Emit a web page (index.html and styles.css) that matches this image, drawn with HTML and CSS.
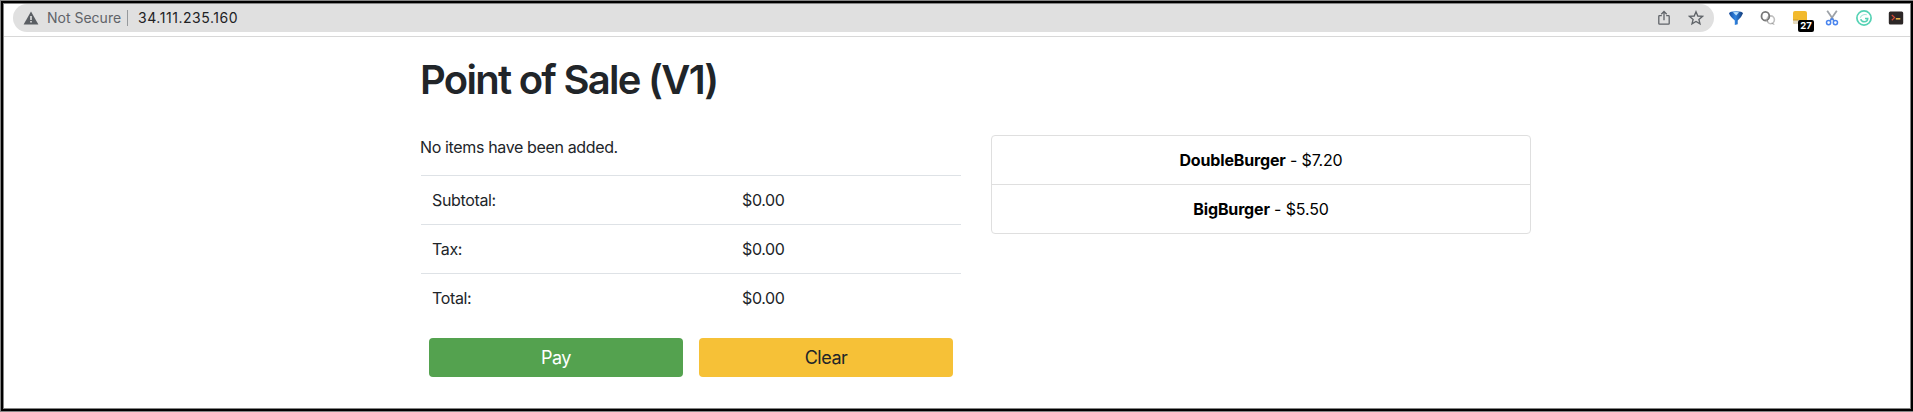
FILE: index.html
```html
<!DOCTYPE html>
<html lang="en">
<head>
<meta charset="utf-8">
<title>Point of Sale</title>
<link rel="stylesheet" href="styles.css">
</head>
<body>
<div class="window">
  <header class="toolbar">
    <div class="address">
      <svg class="warn" width="16" height="14" viewBox="0 0 16 14"><path d="M8 .6 15.4 13.4H.6z" fill="#5a5e63"/><path d="M7.2 5h1.6v4H7.2zM7.2 10h1.6v1.6H7.2z" fill="#e0e0e0"/></svg>
      <span class="insecure">Not Secure</span>
      <span class="divider"></span>
      <span class="url">34.111.235.160</span>
      <svg class="share" width="12" height="16" viewBox="0 0 12 16" fill="none" stroke="#5f6368" stroke-width="1.3"><path d="M3.8 5.6H1.6q-.8 0-.8.8v7q0 .8.8.8h8.8q.8 0 .8-.8v-7q0-.8-.8-.8H8.2M6 10.3V1.6M3.3 4.2 6 1.4l2.7 2.8"/></svg>
      <svg class="star" width="16" height="16" viewBox="0 0 16 16" fill="none" stroke="#5f6368" stroke-width="1.35"><path d="M8 1.8 9.8 6l4.6.4-3.5 3 1.1 4.5L8 11.5l-4 2.4 1.1-4.5-3.5-3L6.2 6z"/></svg>
    </div>
    <div class="extensions">
      <svg width="16" height="16" viewBox="0 0 16 16"><defs><linearGradient id="f" x1="0" x2="1"><stop offset="0" stop-color="#174a9a"/><stop offset=".45" stop-color="#2f83e0"/><stop offset="1" stop-color="#123a78"/></linearGradient></defs><path d="M1 3.2Q1.5 1.2 8 1.2t7 2Q14 6.5 9.7 10.5v3.7L6.8 15v-4.5Q2 6.5 1 3.2z" fill="url(#f)"/><path d="M5 2.2q3-.6 6 0L8.2 5.4z" fill="#b9defb"/></svg>
      <svg width="16" height="16" viewBox="0 0 16 16" fill="none"><ellipse cx="10.7" cy="9.8" rx="3.7" ry="3.9" stroke="#c0c0c0" stroke-width="1.6"/><ellipse cx="5.4" cy="6.2" rx="3.9" ry="4.3" stroke="#777" stroke-width="1.8"/><path d="m5.5 10 2.8 1.8M11.5 13.3l2.8 1" stroke="#999"/></svg>
      <span class="notes"><svg width="16" height="16" viewBox="0 0 16 16"><rect x="1" y="1" width="14" height="13" rx="2" fill="#f2ba2e"/><path d="M1 10h6v4H3q-2 0-2-2z" fill="#e3dac4"/><path d="M1 10h5" stroke="#c99a2c"/></svg><b class="count">27</b></span>
      <svg width="16" height="16" viewBox="0 0 16 16" fill="none"><path d="M3.2.8 9.6 10M12.8.8 6.4 10" stroke="#9da2a8" stroke-width="1.8"/><g stroke="#4a85ee" stroke-width="1.5"><circle cx="4.6" cy="12.6" r="2.1"/><circle cx="11.4" cy="12.6" r="2.1"/><path d="m6 10.8 2-2.2 2 2.2"/></g></svg>
      <svg width="16" height="16" viewBox="0 0 16 16" fill="none"><circle cx="8" cy="8" r="7.1" stroke="#55d2b4" stroke-width="1.7"/><path d="M10.8 4.7Q6 3.7 4.3 7.7" stroke="#a5e8d9" stroke-width="1.1"/><path d="M4.7 9.2q.9 2.6 3.6 2.6 3.3 0 3.4-3.3H9" stroke="#55d2b4" stroke-width="1.6"/></svg>
      <svg width="16" height="16" viewBox="0 0 16 16" fill="none"><rect x=".8" y="1.5" width="14.4" height="13" rx="1.5" fill="#2c2727"/><path d="m3.8 5 2.8 2.6-2.8 2.6" stroke="#d84a37" stroke-width="1.2"/><path d="M7.8 8.8h4.5" stroke="#f0b84a" stroke-width="1.5"/></svg>
    </div>
  </header>
  <main class="container">
    <h1 class="title">Point of Sale (V1)</h1>
    <div class="columns">
      <section class="order">
        <p class="empty">No items have been added.</p>
        <dl class="totals">
          <div class="total-row"><dt>Subtotal:</dt><dd>$0.00</dd></div>
          <div class="total-row"><dt>Tax:</dt><dd>$0.00</dd></div>
          <div class="total-row"><dt>Total:</dt><dd>$0.00</dd></div>
        </dl>
        <div class="actions">
          <button class="btn pay">Pay</button>
          <button class="btn clear">Clear</button>
        </div>
      </section>
      <section class="menu">
        <div class="item"><strong>DoubleBurger</strong> - $7.20</div>
        <div class="item"><strong>BigBurger</strong> - $5.50</div>
      </section>
    </div>
  </main>
</div>
</body>
</html>
```
FILE: styles.css
```css
* { box-sizing: border-box; }
body {
  margin: 0;
  background: #fff;
  color: #212529;
  font: 16px/24px Inter, "Liberation Sans", sans-serif;
}
.window {
  height: 412px;
  overflow: hidden;
  padding: 4px 3px 4px 4px;
  position: relative;
}
.window::after {
  content: "";
  position: absolute;
  inset: 0 -1px 0 0;
  border: 1px solid #858585;
  box-shadow: inset 0 0 0 2px #000, inset 0 0 0 3px #858585;
  pointer-events: none;
}
.toolbar {
  display: flex;
  height: 33px;
  padding-left: 9px;
  border-bottom: 1px solid #d8d8d8;
}
.address {
  display: flex;
  align-items: center;
  width: 1701px;
  height: 28px;
  padding: 0 10px;
  border-radius: 14px;
  background: #e0e0e0;
  font-size: 14px;
  line-height: 20px;
  white-space: nowrap;
}
.insecure { width: 80px; margin-left: 8px; color: #5f6368; }
.divider { width: 1px; height: 16px; background: #96999c; }
.url { margin-left: 10px; color: #202124; letter-spacing: .55px; }
.share { margin-left: auto; }
.star { margin-left: 18px; }
.extensions { display: flex; align-items: center; gap: 16px; height: 28px; margin-left: 14px; }
.extensions svg { display: block; flex: none; }
.notes { position: relative; }
.count {
  position: absolute;
  left: 6px;
  top: 10px;
  width: 16px;
  height: 12px;
  border-radius: 2px;
  background: #000;
  color: #fff;
  font-size: 9.5px;
  line-height: 12px;
  text-align: center;
}
.container { width: 1110px; margin: 19px 0 0 417px; }
.title { margin: 0; font-size: 40px; line-height: 48px; font-weight: 600; letter-spacing: -1.72px; text-indent: -1px; }
.columns { display: grid; grid-template-columns: 540px 540px; gap: 30px; align-items: start; margin-top: 31px; }
.empty { margin: 0 0 16px; letter-spacing: -.36px; text-indent: -1px; }
.totals { margin: 0; letter-spacing: -.35px; }
.total-row { display: grid; grid-template-columns: 309px 1fr; height: 49px; padding: 12px; border-top: 1px solid #dee2e6; }
.total-row dt { text-indent: -1px; }
.total-row dd { margin: 0; }
.actions { display: flex; gap: 16px; margin-top: 16px; padding: 0 8px; }
.btn { flex: 1; height: 39px; padding: 0; border: 0; border-radius: 4px; font: 18px/39px Inter, sans-serif; letter-spacing: -.5px; }
.pay { background: #54a24f; color: #fff; }
.clear { background: #f6c137; color: #212529; }
.menu { border: 1px solid #dfdfdf; border-radius: 4px; color: #000; text-align: center; letter-spacing: -.16px; }
.item { height: 48px; line-height: 48px; }
.item + .item { height: 49px; border-top: 1px solid #dfdfdf; }
```
